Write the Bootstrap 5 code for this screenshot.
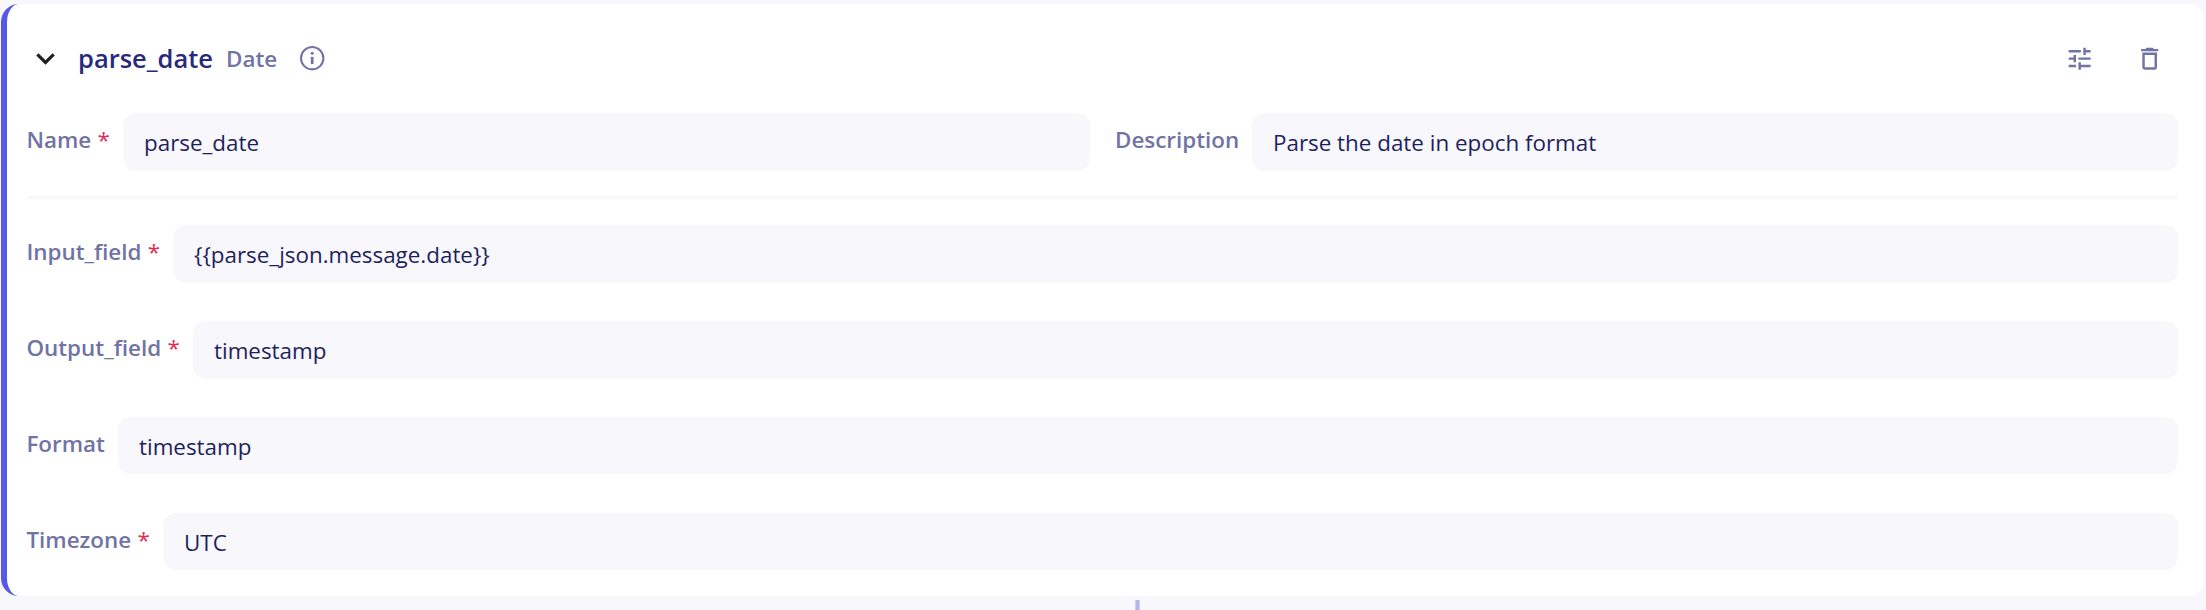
<!DOCTYPE html>
<html lang="en">
<head>
<meta charset="utf-8">
<meta name="viewport" content="width=device-width, initial-scale=1">
<title>parse_date</title>
<link href="https://cdn.jsdelivr.net/npm/bootstrap@5.3.0/dist/css/bootstrap.min.css" rel="stylesheet">
<style>
body{background:#f8f8fc;font-family:"Open Sans",sans-serif;font-size:22.4px;line-height:30px;color:#1f1f60;height:610px;padding-top:4px;overflow:hidden}
.stage-card{margin:0 2px 0 1px;height:592px;border:0;border-left:6px solid #5558e8;border-radius:18px 14px 14px 18px;padding:0 26px 0 20px;background:#fff}
.stage-head{height:109px;flex:none;color:#7173a5}
.stage-title{font-size:25.5px;font-weight:600;color:#28297d;margin:0 0 0 14px}
.stage-kind{font-weight:600;margin-left:13px}
.info{margin-left:23px}
.field-label{font-weight:600;color:#7173a5;padding:0;margin:11.5px 0 0;flex:none;white-space:nowrap;text-indent:-.6px}
.field-label span{color:#e22b52;font-weight:500;margin-left:.5px}
.w-name{width:96px}.w-desc{width:138px;text-indent:1px}.w-input{width:146px}.w-output{width:166px}.w-format{width:91px}.w-zone{width:136px}
.form-control.field-input,.form-control.field-input:focus{background:#f8f8fc;border:0;border-radius:13px;height:58px;padding:0 21px;font-size:22.4px;color:#1f1f60;box-shadow:none}
.form-control.field-short{height:57px;padding-top:1px}
.name-field{width:1063px;flex:none}
.rule{height:3px;flex:none;background:#f8f8fc;margin:25px 0 26px}
.field-list{display:grid;grid-template-rows:96px 96px 96px 57px}
.tool-btn{border:0;background:none;padding:0;color:inherit}
.tool-btn svg,.info svg{display:block}
.trash{margin:0 14px 0 40px}
.link-line{width:5px;height:10px;margin:4px 0 0 1135px;background:#b5b5e8;border:solid #d0d0f1;border-width:0 1px}
</style>
</head>
<body>
<main class="card stage-card">
  <header class="stage-head d-flex align-items-center">
    <button class="tool-btn" aria-label="Collapse"><svg width="37" height="37" viewBox="0 0 24 24"><path fill="#201f1e" d="M7.41 8.590 12 13.170l4.590-4.580L18 10l-6 6-6-6z"/></svg></button>
    <h1 class="stage-title">parse_date</h1>
    <span class="stage-kind">Date</span>
    <span class="info"><svg width="24.400" height="24.400" viewBox="0 0 24 24" fill="none" stroke="currentColor" stroke-width="2"><circle cx="12" cy="12" r="11"/><path d="M12 10.700v7" stroke-width="2.700"/><circle cx="12" cy="7.100" r="1.500" fill="currentColor" stroke="none"/></svg></span>
    <button class="tool-btn ms-auto" aria-label="Settings"><svg width="29.300" height="29.300" viewBox="0 0 24 24" fill="currentColor"><path d="M3 17v2h6v-2H3zM3 5v2h10V5H3zm10 16v-2h8v-2h-8v-2h-2v6h2zM7 9v2H3v2h4v2h2V9H7zm14 4v-2H11v2h10zm-6-4h2V7h4V5h-4V3h-2v6z"/></svg></button>
    <button class="tool-btn trash" aria-label="Delete"><svg width="29.300" height="29.300" viewBox="0 0 24 24" fill="currentColor"><path d="M16 9v10H8V9h8m-1.500-6h-5l-1 1H5v2h14V4h-3.500l-1-1zM18 7H6v12c0 1.100.9 2 2 2h8c1.100 0 2-.9 2-2V7z"/></svg></button>
  </header>
  <div class="d-flex gap-4">
    <div class="d-flex name-field"><label class="field-label w-name" for="f1">Name <span>*</span></label><input id="f1" class="form-control field-input" value="parse_date"></div>
    <div class="d-flex flex-fill"><label class="field-label w-desc" for="f2">Description</label><input id="f2" class="form-control field-input" value="Parse the date in epoch format"></div>
  </div>
  <div class="rule"></div>
  <div class="field-list">
    <div class="d-flex"><label class="field-label w-input" for="f3">Input_field <span>*</span></label><input id="f3" class="form-control field-input" value="{{parse_json.message.date}}"></div>
    <div class="d-flex"><label class="field-label w-output" for="f4">Output_field <span>*</span></label><input id="f4" class="form-control field-input" value="timestamp"></div>
    <div class="d-flex"><label class="field-label w-format" for="f5">Format</label><input id="f5" class="form-control field-input field-short" value="timestamp"></div>
    <div class="d-flex"><label class="field-label w-zone" for="f6">Timezone <span>*</span></label><input id="f6" class="form-control field-input field-short" value="UTC"></div>
  </div>
</main>
<div class="link-line"></div>
<script src="https://cdn.jsdelivr.net/npm/bootstrap@5.3.0/dist/js/bootstrap.bundle.min.js"></script>
</body>
</html>
